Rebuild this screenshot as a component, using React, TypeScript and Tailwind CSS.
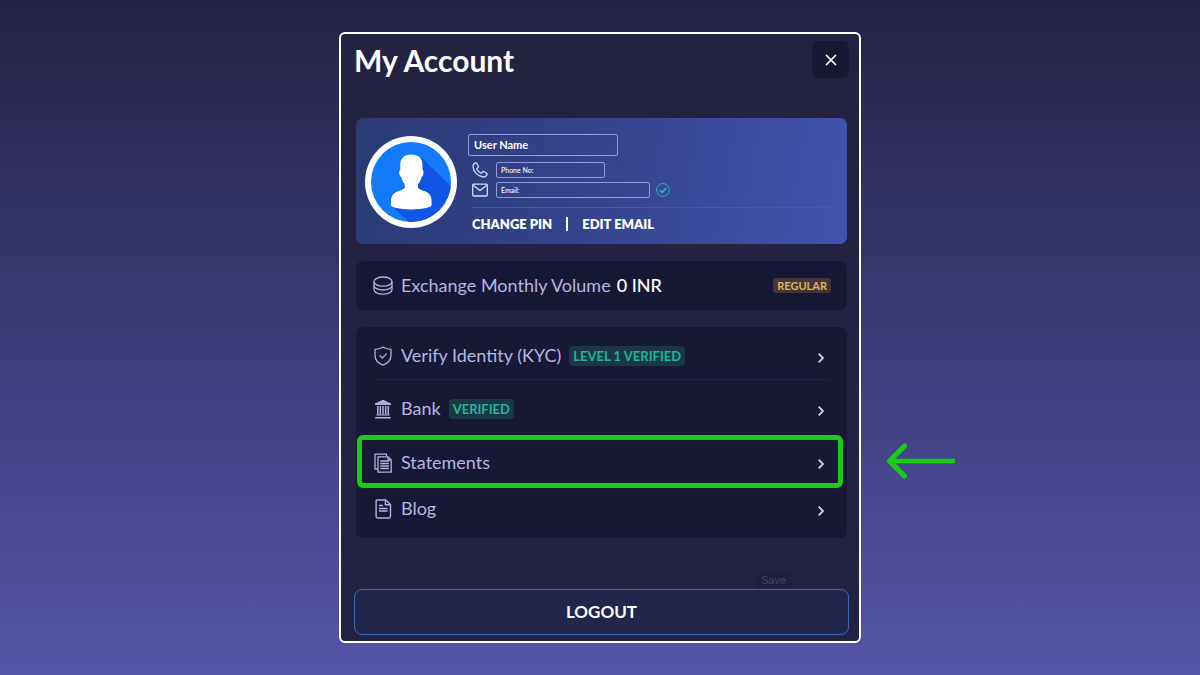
import type { ReactNode } from "react";

const icon = "h-5 w-5 shrink-0 text-[#b3b0e0]";

function CoinsIcon() {
  return (
    <svg viewBox="0 0 20 20" className={icon} fill="none" stroke="currentColor" strokeWidth="1.3">
      <ellipse cx="10" cy="5.6" rx="9" ry="4.6" />
      <path d="M1 5.6v3.8c0 2.500 4 4.600 9 4.600s9-2.100 9-4.600V5.600" />
      <path d="M1 9.400v4.100c0 2.600 4 4.700 9 4.700s9-2.100 9-4.700V9.400" />
    </svg>
  );
}

function ShieldIcon() {
  return (
    <svg viewBox="0 0 20 20" className={icon} fill="none" stroke="currentColor" strokeWidth="1.3" strokeLinejoin="round">
      <path d="M10 1c2.600 1.600 5.200 2.300 8 2.400v6.200c0 4.500-3.100 7.700-8 9.600-4.900-1.900-8-5.100-8-9.600V3.400C4.800 3.300 7.400 2.600 10 1z" />
      <path d="M7 9.800l2.300 2.300 4-4.200" strokeLinecap="round" />
    </svg>
  );
}

function BankIcon() {
  return (
    <svg viewBox="0 0 20 20" className={icon} fill="currentColor">
      <path d="M10 0.800L18 4.600v1.300H2V4.600z" />
      <path d="M4 7h1.500v8.800H4zM6.600 7h1.500v8.800H6.600zM9.250 7h1.500v8.800h-1.500zM11.900 7h1.500v8.800h-1.500zM14.500 7H16v8.800h-1.500z" />
      <path d="M3.400 15.600h13.200v1H3.400zM2.200 17.900h15.600v1.500H2.200z" />
    </svg>
  );
}

function StatementsIcon() {
  return (
    <svg viewBox="0 0 20 20" className={icon} fill="none" stroke="currentColor" strokeWidth="1.300" strokeLinejoin="round">
      <path d="M5 16H2V1.200h11.500v2.600" />
      <path d="M5 3.800h10.200l3 3v12.400H5z" />
      <path d="M15 4v3h3M7.300 8h8.600M7.300 10.500h8.600M7.300 13h8.600M7.300 15.500h8.600" />
    </svg>
  );
}

function BlogIcon() {
  return (
    <svg viewBox="0 0 20 20" className={icon} fill="none" stroke="currentColor" strokeWidth="1.400" strokeLinejoin="round">
      <path d="M4.500 1h8.300l4.700 4.600v12q0 1.400-1.400 1.400H4.500q-1.400 0-1.400-1.400V2.400Q3.100 1 4.500 1z" />
      <path d="M12.400 1.200v4.600h4.800M6 6.500h4M6 9.500h8.500M6 12h8.500" />
    </svg>
  );
}

function Avatar() {
  return (
    <svg viewBox="0 0 92 92" className="h-[92px] w-[92px] shrink-0">
      <defs>
        <clipPath id="disc">
          <circle cx="46" cy="46" r="40" />
        </clipPath>
      </defs>
      <circle cx="46" cy="46" r="46" fill="#fff" />
      <circle cx="46" cy="46" r="40" fill="#137bfb" />
      <path d="M56 21l36 35v36H50L28 71z" fill="#1155e4" clipPath="url(#disc)" />
      <path
        fill="#fff"
        d="M46.500 18.500c6.500 0 11 3.500 11 10v5.300c1.700.8 1.300 6.200-.9 7.200-.6 3-2 5.300-3.600 7.200v3.600c1 1.500 4 2.400 7 3.400 4.500 1.600 6.600 5 6.600 9.800v4.500c0 1.400-7.600 3.900-20.300 3.900S26 70.900 26 69.500V65c0-4.800 2.500-8.200 7-9.800 3-1 5.800-1.900 6.800-3.400v-3.600c-1.600-1.900-3-4.200-3.600-7.200-2.200-1-2.600-6.400-.9-7.200v-5.300c0-6 4-10 11.200-10z"
      />
    </svg>
  );
}

function Badge({ children }: { children: ReactNode }) {
  return (
    <span className="ml-2 flex h-5 items-center rounded-[4px] bg-[#18384a] px-1 text-[13px] leading-none font-bold text-[#25b48e]">
      {children}
    </span>
  );
}

function Chevron() {
  return (
    <svg viewBox="0 0 6 10" className="mt-[3px] ml-auto h-[10px] w-[6px]" fill="none" stroke="#cfcdf3" strokeWidth="1.800">
      <path d="M0.700 0.700L5 5 0.700 9.300" />
    </svg>
  );
}

const items = [
  { label: "Verify Identity (KYC)", badge: "LEVEL 1 VERIFIED", Icon: ShieldIcon },
  { label: "Bank", badge: "VERIFIED", Icon: BankIcon },
  { label: "Statements", Icon: StatementsIcon, marked: true },
  { label: "Blog", Icon: BlogIcon, last: true },
];

export default function App() {
  return (
    <div className="flex min-h-screen items-center justify-center bg-linear-to-b from-[#232246] via-[#3d3c78] to-[#5654a9] font-['Lato',sans-serif]">
      <main className="flex w-full max-w-[522px] flex-col rounded-[6px] border-2 border-white bg-[#242243] pt-[7px] pr-2.5 pb-1.5 pl-[13px]">
        <header className="flex items-center justify-between">
          <h1 className="text-[30px] leading-9 font-bold text-white">My Account</h1>
          <button aria-label="Close" className="flex h-[37px] w-[37px] items-center justify-center rounded-[6px] bg-[#171836]">
            <svg viewBox="0 0 12 12" className="h-3 w-3" stroke="#fff" strokeWidth="1.700" strokeLinecap="round">
              <path d="M1.500 1.500l9 9M10.500 1.500l-9 9" />
            </svg>
          </button>
        </header>

        <section className="mt-10 mr-0.5 ml-0.5 flex h-[126px] rounded-[7px] bg-linear-100 from-[#2a3a72] via-[#34448f] to-[#3f54ae] pr-[15px] pl-[9px]">
          <div className="pt-[18px]">
            <Avatar />
          </div>
          <div className="ml-[11px] flex-1 pt-4 text-white">
            <label className="flex h-[22px] w-[150px] items-center rounded-[2px] border border-[#8e9be0] px-[5px] text-[11px] font-bold">
              <span className="shrink-0">User Name</span>
              <input type="text" className="w-0 flex-1 bg-transparent outline-none" />
            </label>
            <div className="mt-1.5 flex items-center gap-2 pl-1">
              <svg viewBox="0 0 16 16" className="h-4 w-4" fill="none" stroke="#d5daf8" strokeWidth="1.300" strokeLinejoin="round">
                <path d="M3.400 0.900C2 1.500 0.900 3 1 4.700c.5 5.300 5 9.800 10.300 10.300 1.700.1 3.200-1 3.800-2.400.2-.6 0-1.100-.5-1.400l-2.600-1.500c-.5-.3-1-.2-1.400.2l-.8.900c-.4.4-.9.400-1.300.2-1.500-.9-2.600-2-3.500-3.500-.2-.4-.2-.9.200-1.300l.9-.8c.4-.4.5-.9.200-1.400L4.800 1.400c-.3-.5-.8-.7-1.400-.5z" />
              </svg>
              <label className="flex h-4 w-[109px] items-center rounded-[2px] border border-[#8e9be0] px-1 text-[7px] font-medium">
                <span className="shrink-0">Phone No:</span>
                <input type="tel" className="w-0 flex-1 bg-transparent outline-none" />
              </label>
            </div>
            <div className="mt-1 flex items-center gap-2 pl-1">
              <svg viewBox="0 0 16 16" className="h-4 w-4" fill="none" stroke="#d5daf8" strokeWidth="1.300" strokeLinejoin="round">
                <rect x="0.700" y="2.200" width="14.600" height="11.800" rx="1" />
                <path d="M1.200 3.200L8 8.600l6.800-5.400" />
              </svg>
              <label className="flex h-4 w-[154px] items-center rounded-[2px] border border-[#8e9be0] px-1 text-[7px] font-medium">
                <span className="shrink-0">Email:</span>
                <input type="email" className="w-0 flex-1 bg-transparent outline-none" />
              </label>
              <svg viewBox="0 0 14 14" className="-ml-0.5 h-3.5 w-3.5" fill="none" stroke="#27b5b0">
                <circle cx="7" cy="7" r="6.400" />
                <path d="M4 7.200l2.200 2.200L10.300 5" strokeWidth="1.800" />
              </svg>
            </div>
            <div className="mt-[9px] ml-1 flex items-center border-t border-[#3460ae] pt-2 text-[13px] leading-4 font-extrabold">
              <a href="#pin">CHANGE PIN</a>
              <span className="mx-3.5 h-3.5 w-0.5 bg-white" />
              <a href="#email">EDIT EMAIL</a>
            </div>
          </div>
        </section>

        <section className="mt-[17px] mr-0.5 ml-0.5 flex h-[49px] items-center rounded-[7px] bg-[#171836] pr-4 pl-[17px] text-[18px] leading-[22px] text-[#b7b4e6]">
          <CoinsIcon />
          <span className="ml-2 pb-0.5">Exchange Monthly Volume</span>
          <span className="ml-1.5 pb-0.5 font-medium text-white">0 INR</span>
          <span className="ml-auto flex h-[15px] items-center rounded-[3px] bg-[#43363b] px-1 text-[11px] leading-none font-bold text-[#e2af56]">
            REGULAR
          </span>
        </section>

        <ul className="mt-[17px] mr-0.5 ml-0.5 rounded-[7px] bg-[#171836]">
          {items.map(({ label, badge, Icon, marked, last }) => (
            <li key={label} className="relative px-[17px]">
              <button
                className={`flex w-full items-center pr-1.5 text-[18px] leading-[22px] text-[#b7b4e6] ${
                  last ? "h-[52px] pb-1.5" : "h-[53px] pt-1.5"
                } ${last || marked ? "" : "border-b border-[#212245]"}`}
              >
                <Icon />
                <span className="ml-2 pb-0.5">{label}</span>
                {badge && <Badge>{badge}</Badge>}
                <Chevron />
              </button>
              {marked && (
                <>
                  <span className="pointer-events-none absolute top-0.5 right-1 -bottom-0.5 left-px rounded-[6px] border-5 border-[#19cd16]" />
                  <svg
                    viewBox="0 0 70 36"
                    className="absolute top-2.5 left-full ml-[39px] h-9 w-[70px]"
                    fill="none"
                    stroke="#19cd16"
                    strokeWidth="5"
                    strokeLinejoin="round"
                  >
                    <path d="M69 18H4" strokeWidth="4.500" />
                    <path d="M18.500 3L3.500 18l15 15" strokeLinecap="round" />
                  </svg>
                </>
              )}
            </li>
          ))}
        </ul>

        <button className="mt-[34px] mr-[58px] h-[17px] self-end bg-[#201f40] px-[5px] font-['Liberation_Sans',sans-serif] text-[11px] leading-none text-[#444368]">
          Save
        </button>
        <button className="h-[46px] rounded-[8px] border border-[#3b68b4] bg-[#23264c] text-[17px] leading-6 font-bold text-white">
          LOGOUT
        </button>
      </main>
    </div>
  );
}
